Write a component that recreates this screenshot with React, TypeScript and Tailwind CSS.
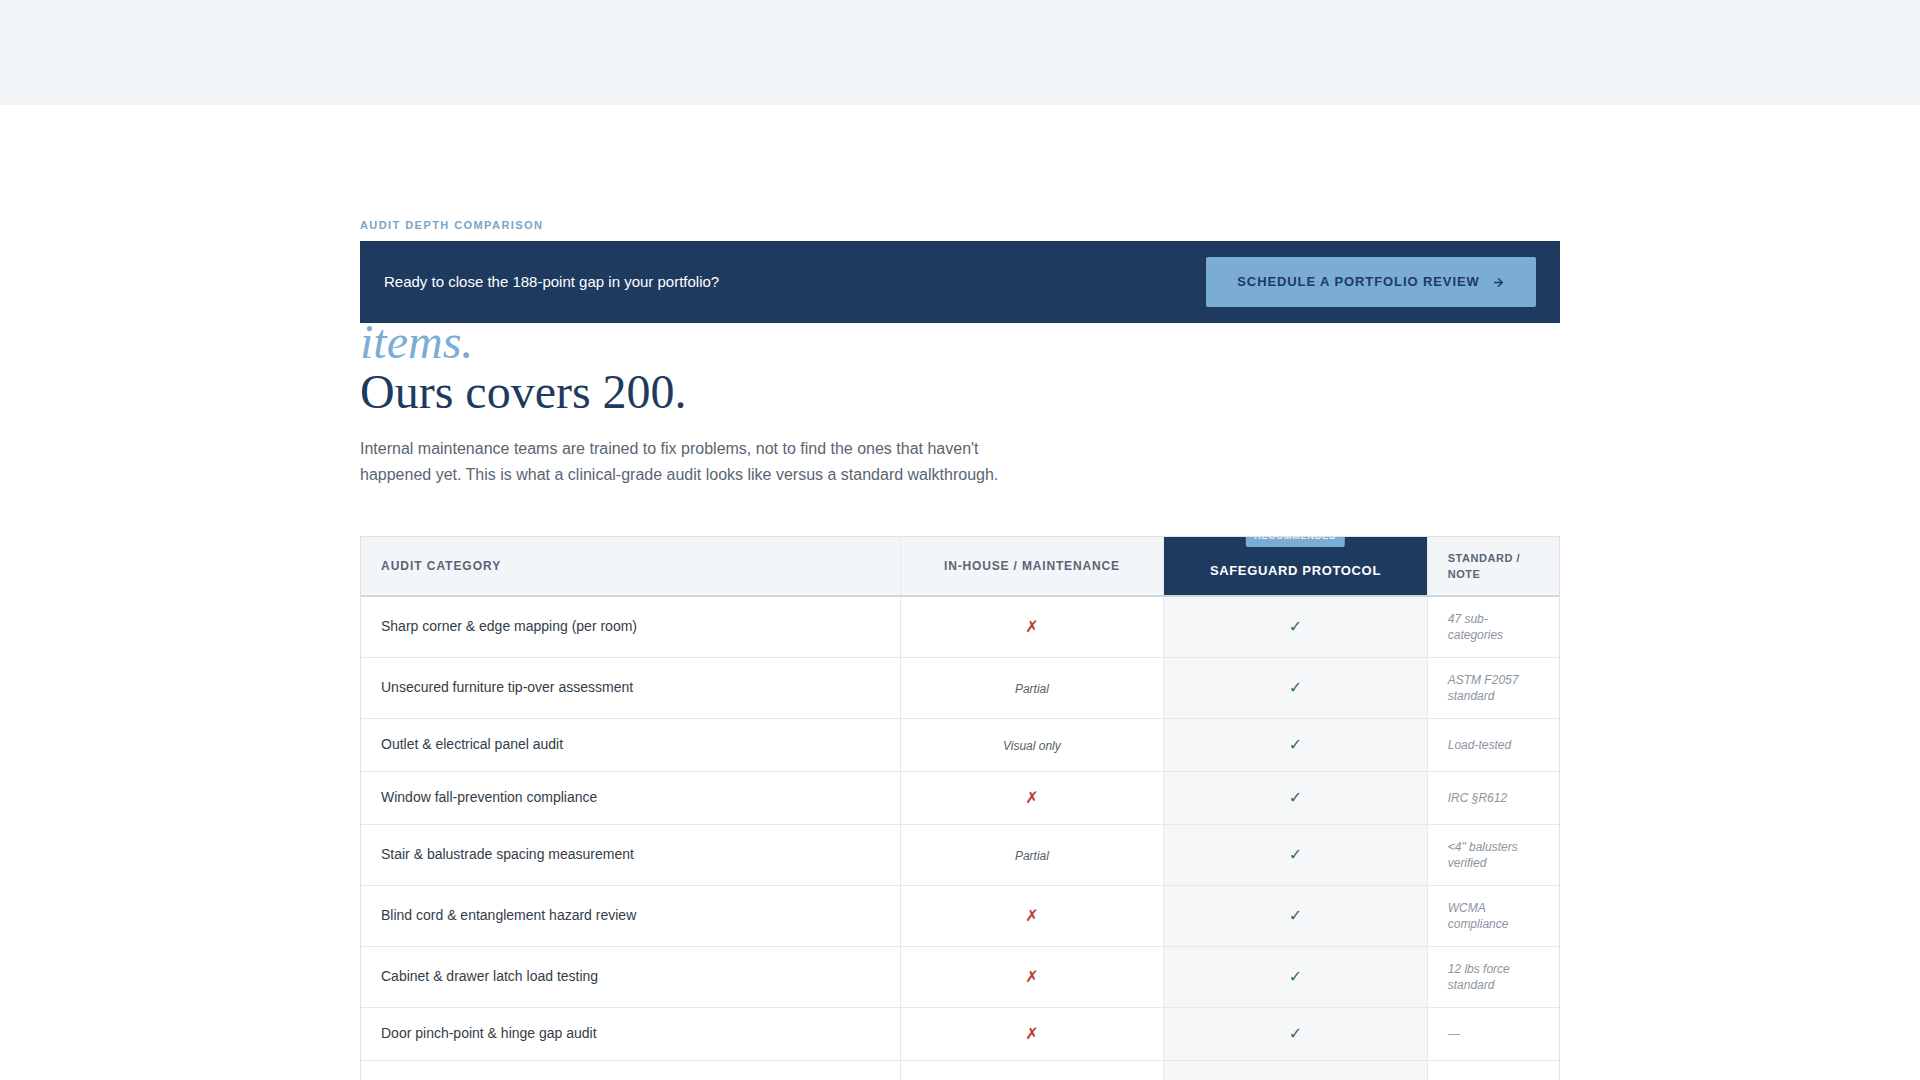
import { ArrowRight } from "lucide-react";

type Mark = "yes" | "no" | string;
type Row = { label: string; inHouse: Mark; note: string };

const rows: Row[] = [
  { label: "Sharp corner & edge mapping (per room)", inHouse: "no", note: "47 sub-categories" },
  { label: "Unsecured furniture tip-over assessment", inHouse: "Partial", note: "ASTM F2057 standard" },
  { label: "Outlet & electrical panel audit", inHouse: "Visual only", note: "Load-tested" },
  { label: "Window fall-prevention compliance", inHouse: "no", note: "IRC §R612" },
  { label: "Stair & balustrade spacing measurement", inHouse: "Partial", note: "<4\" balusters verified" },
  { label: "Blind cord & entanglement hazard review", inHouse: "no", note: "WCMA compliance" },
  { label: "Cabinet & drawer latch load testing", inHouse: "no", note: "12 lbs force standard" },
  { label: "Door pinch-point & hinge gap audit", inHouse: "no", note: "—" },
  { label: "Water heater scald-risk temperature check", inHouse: "Partial", note: "120°F max" },
  { label: "Pool & water feature barrier review", inHouse: "no", note: "ASTM F2286" },
];

const glyph = { fontFamily: '"DejaVu Sans", "Liberation Sans", sans-serif' };

function Cell({ v }: { v: Mark }) {
  if (v === "yes") return <span style={glyph} className="text-base font-bold text-[#2f6e4f]">✓</span>;
  if (v === "no") return <span style={glyph} className="text-base font-bold text-[#b83a32]">✗</span>;
  return <span className="text-xs italic text-[#555f6b]">{v}</span>;
}

export default function App() {
  return (
    <div className="min-h-screen bg-white" style={{ fontFamily: '"Liberation Sans", Arial, sans-serif' }}>
      <div className="h-[105px] bg-[#f2f5f8]" />

      <section className="mx-auto w-[1200px] pt-28 pb-24">
        <p className="mb-2 text-[11px] font-bold uppercase leading-4 tracking-[0.13em] text-[#7aa5c8]">Audit Depth Comparison</p>

        <div className="relative z-10 flex items-center justify-between bg-[#1e3a5f] px-6 py-4">
          <p className="text-[15px] text-white">Ready to close the 188-point gap in your portfolio?</p>
          <button className="flex h-[50px] w-[330px] items-center justify-center gap-3 rounded-[2px] bg-[#7badd4] text-[13px] font-bold uppercase tracking-[0.07em] text-[#1e3a5f]">
            Schedule a Portfolio Review
            <ArrowRight size={13} strokeWidth={2.75} />
          </button>
        </div>

        <h2 className="-mt-1.5 text-5xl leading-[1.05] text-[#1e3a5f]" style={{ fontFamily: '"Liberation Serif", "Times New Roman", serif' }}>
          <em className="text-[#7badd4]">items.</em>
          <br />
          Ours covers 200.
        </h2>

        <p className="mt-[18px] max-w-2xl text-base leading-[26px] text-[#5b6572]">
          Internal maintenance teams are trained to fix problems, not to find the ones that haven't happened yet. This is what a clinical-grade audit looks like versus a standard walkthrough.
        </p>

        <div className="mt-12 overflow-hidden border border-[#dde3ea]">
          <table className="w-full table-fixed border-collapse">
            <colgroup>
              <col className="w-[45%]" />
              <col className="w-[22%]" />
              <col className="w-[22%]" />
              <col className="w-[11%]" />
            </colgroup>
            <thead>
              <tr>
                <th className="border-r border-b-2 border-r-[#e5e9ee] border-b-[#cfd6de] bg-[#f3f6f9] px-5 py-[13px] text-left text-xs font-bold uppercase tracking-[0.08em] text-[#5b6573]">Audit Category</th>
                <th className="border-r border-b-2 border-r-[#e5e9ee] border-b-[#cfd6de] bg-[#f3f6f9] px-5 py-[13px] text-center text-xs font-bold uppercase tracking-[0.07em] text-[#5b6573]">In-House / Maintenance</th>
                <th className="relative border-b-2 border-b-[#cfd6de] bg-[#1e3a5f] px-5 pt-[18px] pb-[8px] text-center text-[13px] font-bold uppercase tracking-[0.05em] text-white">
                  <span className="absolute -top-[11px] left-1/2 -translate-x-1/2 rounded-[2px] bg-[#7badd4] px-2 py-1 text-[9px] leading-[13px] font-bold tracking-[0.1em] text-[#e8f1f8]">RECOMMENDED</span>
                  Safeguard Protocol
                </th>
                <th className="border-l border-b-2 border-l-[#e5e9ee] border-b-[#cfd6de] bg-[#f3f6f9] px-5 py-[13px] text-left text-[11px] font-bold uppercase leading-4 tracking-[0.05em] text-[#5b6573]">Standard / Note</th>
              </tr>
            </thead>
            <tbody>
              {rows.map((r) => (
                <tr key={r.label} className="border-b border-[#e5e9ee]">
                  <td className="border-r border-[#e5e9ee] px-5 py-3.5 text-sm leading-[21px] text-[#333d48]">{r.label}</td>
                  <td className="border-r border-[#e5e9ee] px-5 py-3.5 text-center leading-6"><Cell v={r.inHouse} /></td>
                  <td className="bg-[#f5f7f9] px-5 py-3.5 text-center leading-6"><Cell v="yes" /></td>
                  <td className="border-l border-[#e5e9ee] px-5 py-3.5 text-xs italic leading-4 text-[#8b95a1]">
                    {r.note === "—" ? <span className="not-italic text-[#9aa3ad]">—</span> : r.note}
                  </td>
                </tr>
              ))}
            </tbody>
          </table>
        </div>
      </section>
    </div>
  );
}
